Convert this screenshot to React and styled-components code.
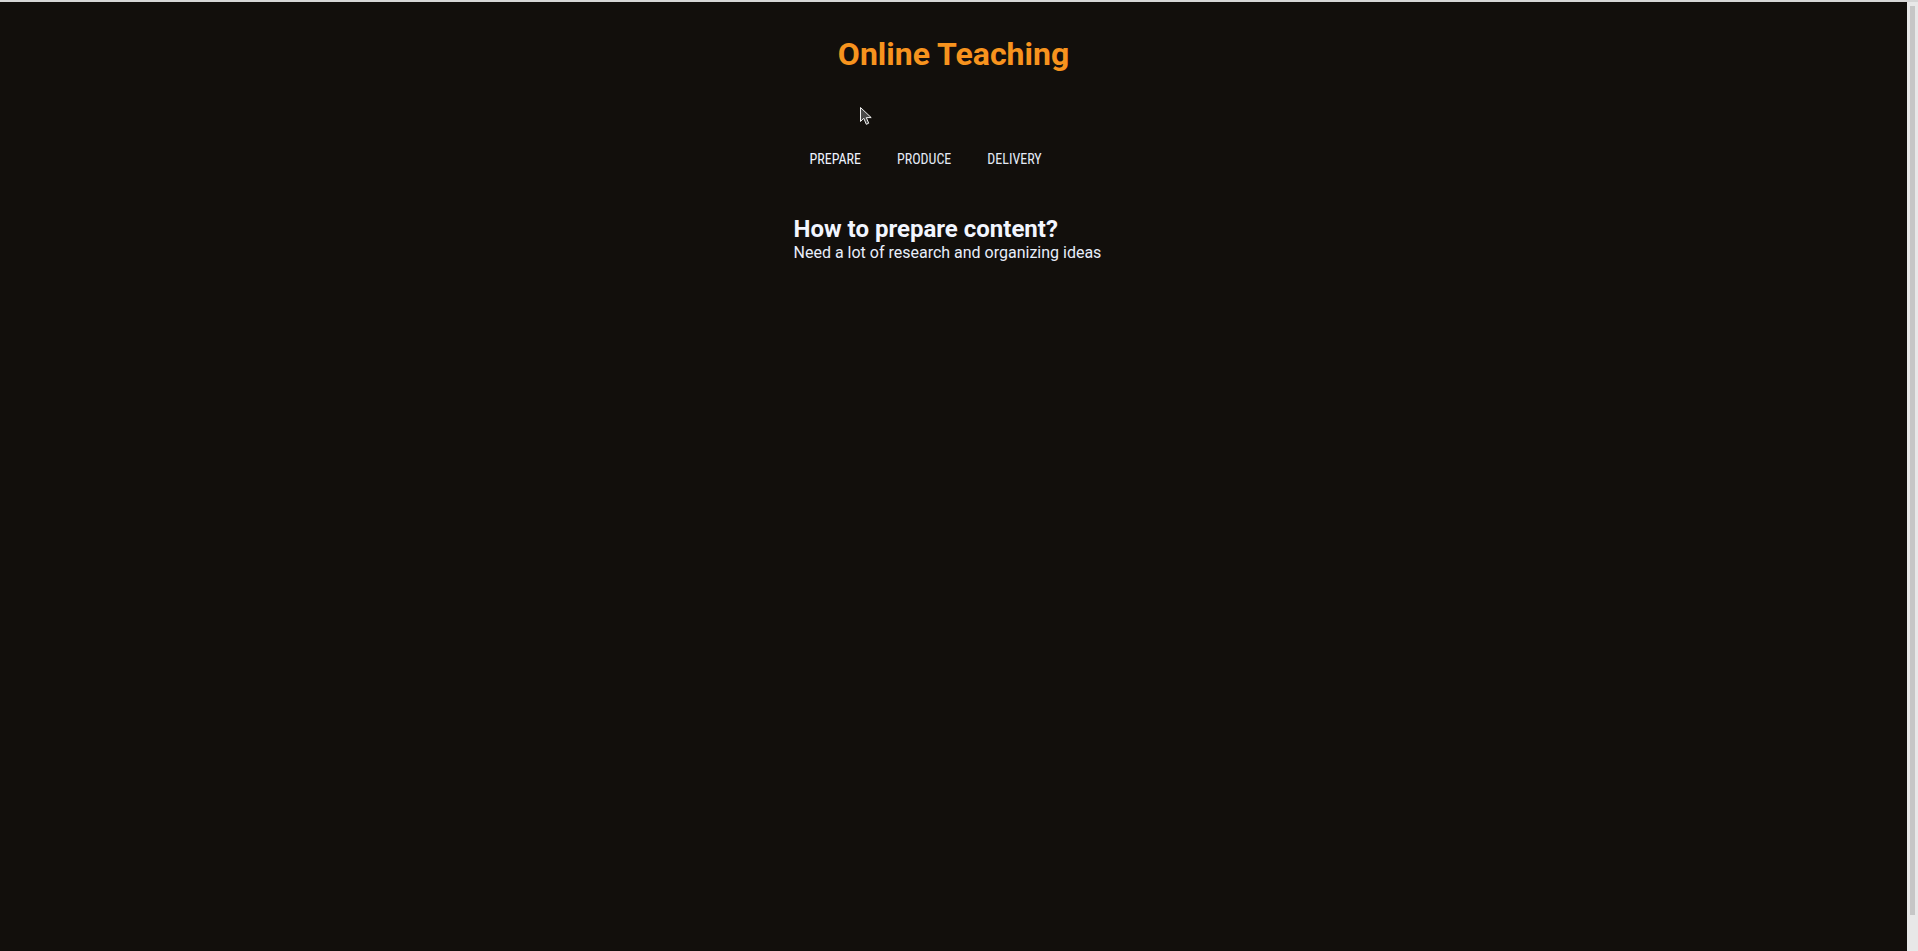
import { useState } from "react"
import { styled, createGlobalStyle } from "styled-components"

const GlobalStyle = createGlobalStyle`
  html, body {
    margin: 0;
    padding: 0;
    background: #120f0c;
    overflow: hidden;
  }

  body {
    font-family: Roboto, "Liberation Sans", Arial, sans-serif;
    color: #eef3ff;
  }
`

const tabs = [
  {
    key: "prepare",
    label: "Prepare",
    title: "How to prepare content?",
    text: "Need a lot of research and organizing ideas",
  },
  {
    key: "produce",
    label: "Produce",
    title: "How to produce content?",
    text: "Record, edit and polish the material",
  },
  {
    key: "delivery",
    label: "Delivery",
    title: "How to deliver content?",
    text: "Share it with students and collect feedback",
  },
]

export default function App() {
  const [active, setActive] = useState("prepare")
  const current = tabs.find((t) => t.key === active)

  return (
    <>
      <GlobalStyle />
      <Window>
        <Page>
          <Title>Online Teaching</Title>
          <Wrapper>
            <TabBar>
              {tabs.map((t) => (
                <TabButton
                  key={t.key}
                  $active={t.key === active}
                  onClick={() => setActive(t.key)}
                >
                  {t.label}
                </TabButton>
              ))}
            </TabBar>
            <Content>
              <ContentTitle>{current.title}</ContentTitle>
              <ContentText>{current.text}</ContentText>
            </Content>
          </Wrapper>
          <Cursor viewBox="0 0 12 18" width="12" height="18">
            <path
              d="M0.5 0.5 L0.5 14.5 L3.8 11.3 L6.3 17.3 L8.7 16.2 L6.3 10.6 L11.2 10.6 Z"
              fill="#4a4a4a"
              stroke="#f2f2f2"
              strokeWidth="1"
              strokeLinejoin="round"
            />
          </Cursor>
        </Page>
        <ScrollRail>
          <ScrollThumb />
        </ScrollRail>
      </Window>
    </>
  )
}

const Window = styled.div`
  display: flex;
  height: 100vh;
  box-sizing: border-box;
  border-top: 2px solid #d6d6d6;
`

const Page = styled.main`
  position: relative;
  flex: 1;
  padding-top: 33px;
`

const ScrollRail = styled.div`
  width: 11px;
  display: flex;
  flex-direction: column;
  padding: 4px 3px 36px;
  box-sizing: border-box;
  background: #e8e8e8;
`

const ScrollThumb = styled.div`
  flex: 1;
  background: #c6c6c6;
`

const Title = styled.h1`
  margin: 0;
  text-align: center;
  font-size: 32px;
  font-weight: 700;
  color: #f7931e;
`

const Wrapper = styled.div`
  width: 320px;
  margin: 0 auto;
  padding-top: 72px;
`

const TabBar = styled.div`
  display: flex;
  gap: 4px;
`

const TabButton = styled.button`
  background: none;
  border: none;
  padding: 6px 16px;
  font-family: Roboto, "Liberation Sans", Arial, sans-serif;
  font-size: 14px;
  font-stretch: 83%;
  text-transform: uppercase;
  color: ${(props) => (props.$active ? "#eef3ff" : "#e4ebf7")};
  cursor: pointer;
`

const Content = styled.div`
  padding-top: 42px;
`

const ContentTitle = styled.h2`
  margin: 0;
  font-size: 24px;
  font-weight: 700;
  color: #f2f6ff;
`

const ContentText = styled.p`
  margin: 0;
  font-size: 16px;
  color: #e8eefb;
`

const Cursor = styled.svg`
  position: absolute;
  left: 860px;
  top: 105px;
`
